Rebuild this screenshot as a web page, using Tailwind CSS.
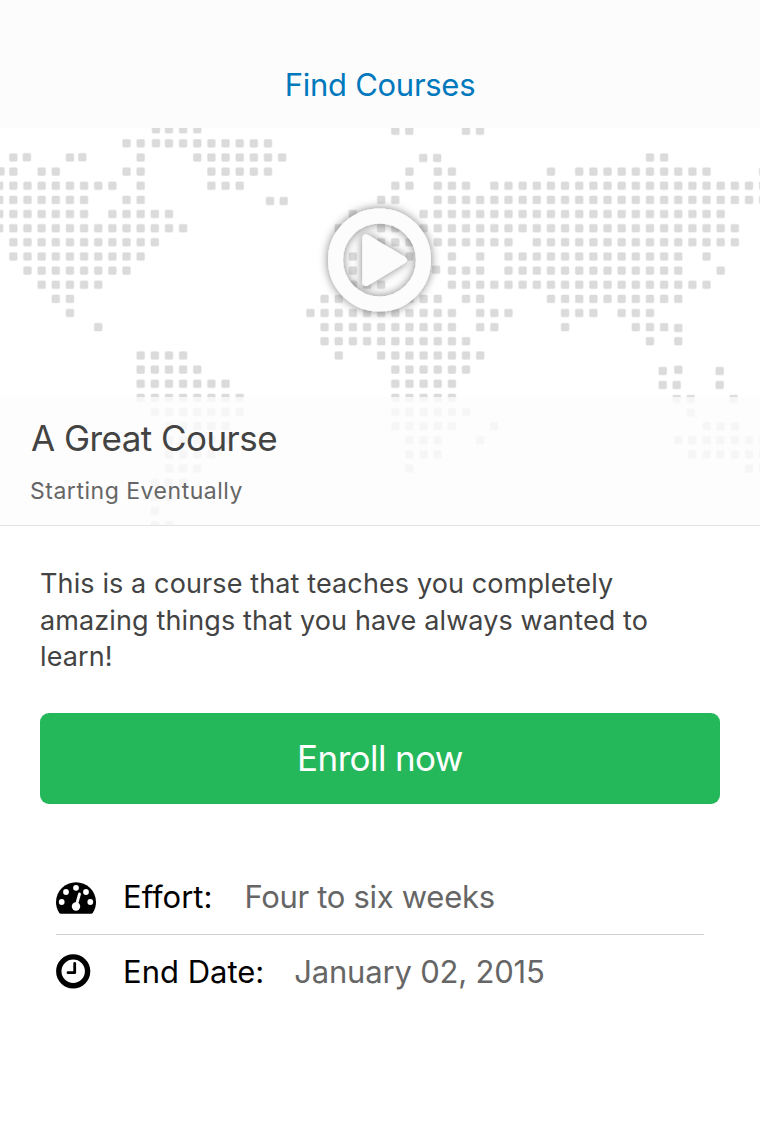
<!DOCTYPE html>
<html lang="en">
<head>
<meta charset="utf-8">
<title>Find Courses</title>
<script src="https://cdn.jsdelivr.net/npm/@tailwindcss/browser@4"></script>
</head>
<body class="bg-white font-['Inter',sans-serif] w-[760px] h-[1136px] overflow-hidden flex flex-col">
<header class="h-32 bg-[#fcfcfc] flex justify-center pt-[65px] shrink-0">
  <h1 class="text-[31px] leading-10 text-[#0079bc] whitespace-nowrap tracking-[-0.28px]">Find Courses</h1>
</header>
<section class="relative h-[398px] shrink-0 overflow-hidden flex flex-col justify-end">
  <svg class="absolute inset-0" width="760" height="398" viewBox="0 128 760 398">
    <defs>
      <filter id="glow" x="-30%" y="-30%" width="160%" height="160%"><feDropShadow dx="0" dy="0" stdDeviation="5" flood-color="#000" flood-opacity=".5"/></filter>
    </defs>
    <path id="map" fill="#dbdbdb" stroke="#dbdbdb" stroke-opacity=".5" stroke-width="1.3"/>
    <g filter="url(#glow)" fill="#fcfcfc">
      <circle cx="379.5" cy="260" r="44" fill="none" stroke="#fcfcfc" stroke-width="15"/>
      <path d="M362.3 238.5C362.3 235 365 233.4 368 235L405 257Q409.400 260 405 263L368 285.500C365 287 362.300 285.500 362.300 282Z"/>
    </g>
  </svg>
  <div class="relative h-[129px] bg-[#fcfcfc]/80 border-b border-[#e3e3e3] px-[30px] pt-[19px] text-[#434343] whitespace-nowrap">
    <h2 class="pl-px text-[35px] leading-[44px] tracking-[-0.55px]">A Great Course</h2>
    <p class="text-[23px] leading-[30px] mt-4 text-[#666] tracking-[0.52px]">Starting Eventually</p>
  </div>
</section>
<main class="px-10 flex flex-col">
  <p class="mt-10 text-[27px] leading-[36.5px] text-[#434343] whitespace-nowrap tracking-[0.12px]">This is a course that teaches you completely<br>amazing things that you have always wanted to<br>learn!</p>
  <button class="mt-[37px] h-[91px] rounded-[9px] bg-[#25b85a] text-white text-[35px] leading-[44px] whitespace-nowrap tracking-[-0.6px]">Enroll now</button>
  <div class="mx-4 mt-14 text-[31px] leading-10 whitespace-nowrap">
    <div class="h-[75px] border-b border-[#cfcfcf] flex items-center">
      <svg class="w-10 h-8 mt-[3px]" viewBox="0 0 40 32"><path d="M3 30.500C1 27 0 24 0 20A20 19.700 0 0 1 40 20C40 24 39 27 37 30.500Q36.300 31.700 35 31.700H5Q3.700 31.700 3 30.500Z"/><g fill="#fff"><circle cx="5.700" cy="20" r="2.900"/><circle cx="10" cy="10" r="2.900"/><circle cx="20" cy="5.800" r="2.900"/><circle cx="30" cy="10" r="2.900"/><circle cx="34.300" cy="20" r="2.900"/><circle cx="20" cy="24.500" r="4.200"/></g><path d="M20.700 22L23.500 12" stroke="#fff" stroke-width="2.800" stroke-linecap="round"/></svg>
      <span class="ml-[27px] tracking-[0.02px]">Effort:</span><span class="ml-8 text-[#666] tracking-[-0.3px]">Four to six weeks</span>
    </div>
    <div class="h-[74px] flex items-center">
      <svg class="w-[35px] h-[35px]" viewBox="0 0 35 35" fill="none" stroke="#000"><circle cx="17.200" cy="17.300" r="14.400" stroke-width="5.400"/><path d="M18.700 9.500V18.700H12" stroke-width="2.800" stroke-linecap="round" stroke-linejoin="round"/></svg>
      <span class="ml-8">End Date:</span><span class="ml-[30px] text-[#666] tracking-[-0.2px]">January 02, 2015</span>
    </div>
  </div>
</main>
<script>
  // Column ranges of the world map's dots, one entry per row
  const rows = ["12-14","9 10 12-19","1 5 10 14-20 46 47","1 3 4 9 10 15-19 29 31 32 39 41-50 54","0-8 10 15-17 28 29 31-33 35-54","0-6 9 10 27 28 31-54","0-6 8-12 25 30-51","0-13 24 27 28 30-52","1-11 27-29 31-36 38-52","1-10 25 29 32 34 36-48 50","2-9 25 32-34 36-48 51","3-7 25-27 32-50","4 5 23 24 29-31 33 34 39-48","5 22-32 34-36 40-42 44-46","7 23-32 34 35 40 45-47","23-33 46 48","10-13 24 27-34","10-14 28-33","10-16 28-32","10-17 28-32","11-17 28-33","12-16 28-32","12-16 29-31","12-15 29-31","12-14 29","11-13","11 12","11","11 12"];
  // Dots that lie off the regular grid
  const extra = [[395.300,130.700],[409.300,130.700],[466,130.700],[480,130.700],[156,129.200],[156,143.300],[26.900,157.300],[82.300,157.300],[423.200,158],[437.200,158],[.5,171.400],[270,201],[283.700,201],[436,269.700],[678.300,328],[662.700,371],[678.300,369.700],[719.700,371],[662.700,385],[676.700,385],[719.700,385],[676.700,399],[690.700,399],[733.700,399],[690.700,412.700],[494,426.200],[706.700,426.200],[720.300,426.200],[735,426.200],[480.200,440.300]];
  for (const x of [678.300,692.300,706.700,720.300,735,749,763]) extra.push([x,440.300]);
  for (const x of [692.300,706.700,720.300,735,749,763]) extra.push([x,454.400]);
  for (const x of [749,763]) extra.push([x,468.600]);
  let d = "";
  const dot = (x,y) => { d += `M${x-2.5} ${y-3.8}h5q1.300 0 1.300 1.300v5q0 1.300 -1.300 1.300h-5q-1.300 0 -1.300 -1.300v-5q0 -1.300 1.300 -1.300z`; };
  rows.forEach((row,r) => row.split(" ").forEach(s => {
    const [a,b=a] = s.split("-").map(Number);
    for (let k=a;k<=b;k++) dot(-.8+14.147*k, 129.2+14.14*r);
  }));
  extra.forEach(p => dot(...p));
  document.getElementById("map").setAttribute("d", d);
</script>
</body>
</html>
